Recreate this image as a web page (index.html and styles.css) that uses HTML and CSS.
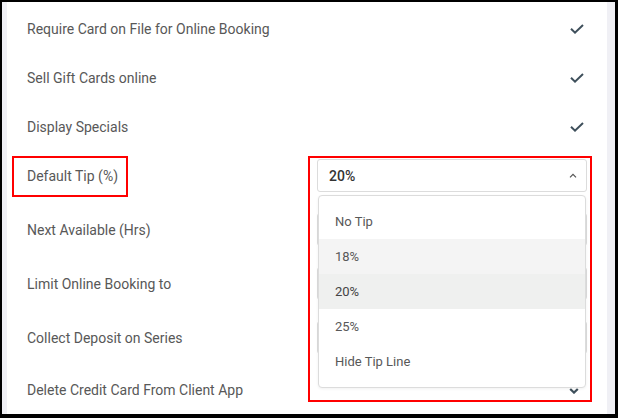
FILE: index.html
```html
<!DOCTYPE html>
<html lang="en">
<head>
  <meta charset="UTF-8">
  <title>Online Booking Settings</title>
  <link rel="stylesheet" href="styles.css">
</head>
<body>
  <div class="frame">
    <div class="panel">

      <div class="row">
        <span class="label">Require Card on File for Online Booking</span>
        <span class="value">
          <svg class="check" width="14" height="10" viewBox="0 0 14 10"><path d="M1 4.8 L5 8.6 L13 1"/></svg>
        </span>
      </div>

      <div class="row">
        <span class="label">Sell Gift Cards online</span>
        <span class="value">
          <svg class="check" width="14" height="10" viewBox="0 0 14 10"><path d="M1 4.8 L5 8.6 L13 1"/></svg>
        </span>
      </div>

      <div class="row">
        <span class="label">Display Specials</span>
        <span class="value">
          <svg class="check" width="14" height="10" viewBox="0 0 14 10"><path d="M1 4.8 L5 8.6 L13 1"/></svg>
        </span>
      </div>

      <!-- open dropdown -->
      <div class="row row-field">
        <span class="label">Default Tip (%)</span>
        <div class="field">
          <div class="select">
            <span class="select-text">20%</span>
            <svg class="caret" width="8" height="5" viewBox="0 0 8 5"><path d="M1 4.3 L4 1.3 L7 4.3"/></svg>
          </div>
          <ul class="menu">
            <li class="menu-item">No Tip</li>
            <li class="menu-item hover">18%</li>
            <li class="menu-item selected">20%</li>
            <li class="menu-item">25%</li>
            <li class="menu-item">Hide Tip Line</li>
          </ul>
        </div>
        <div class="mark mark-label"></div>
        <div class="mark mark-field"></div>
      </div>

      <div class="row row-field">
        <span class="label">Next Available (Hrs)</span>
        <div class="field"><div class="select"></div></div>
      </div>

      <div class="row row-field">
        <span class="label">Limit Online Booking to</span>
        <div class="field"><div class="select"></div></div>
      </div>

      <div class="row row-field">
        <span class="label">Collect Deposit on Series</span>
        <div class="field"><div class="select"></div></div>
      </div>

      <div class="row row-field">
        <span class="label">Delete Credit Card From Client App</span>
        <div class="field">
          <div class="select select-plain">
            <svg class="caret-down" width="10" height="6" viewBox="0 0 10 6"><path d="M1.2 1 L5 4.6 L8.8 1"/></svg>
          </div>
        </div>
      </div>

    </div>
  </div>
</body>
</html>
```

FILE: styles.css
```css
/* Page frame */
body {
  margin: 0;
  font-family: Roboto, 'Liberation Sans', sans-serif;
}

.frame {
  box-sizing: border-box;
  width: 618px;
  height: 418px;
  border: solid #000;
  border-width: 2px 3px 4px 2px;
  background: #f0f0f5;
  overflow: hidden;
}

.panel {
  height: 100%;
  margin: 0 8px 0 5px;
  padding-top: 2px;
  background: #fff;
  box-sizing: border-box;
}

/* Setting rows */
.row {
  position: relative;
  display: flex;
  align-items: center;
  height: 49px;
  padding: 0 20px;
}

.row-field {
  height: auto;
  padding-top: 8px;
  padding-bottom: 13px;
}

.label {
  flex: 1;
  font-size: 14px;
  color: #585858;
}

.value {
  display: flex;
  justify-content: flex-end;
  width: 270px;
  padding-right: 3px;
  box-sizing: border-box;
}

.check path {
  fill: none;
  stroke: #3e4f5b;
  stroke-width: 2;
}

/* Select fields */
.field {
  position: relative;
  width: 270px;
}

.select {
  display: flex;
  align-items: center;
  height: 33px;
  padding: 0 9px 0 11px;
  border: 1px solid #dcdcdc;
  border-radius: 3px;
  box-sizing: border-box;
}

.select-plain {
  height: 29px;
  border-color: transparent;
  padding-right: 7px;
}

.select-text {
  flex: 1;
  font-size: 14px;
  font-weight: 500;
  color: #333;
}

.caret {
  margin-left: auto;
}
.caret path {
  fill: none;
  stroke: #555;
  stroke-width: 1.2;
}

.caret-down {
  margin-left: auto;
  margin-top: 3px;
}
.caret-down path {
  fill: none;
  stroke: #3e4f5b;
  stroke-width: 2.2;
}

/* Dropdown menu */
.menu {
  position: absolute;
  top: 36px;
  left: 1px;
  z-index: 5;
  width: 268px;
  margin: 0;
  padding: 8px 0;
  list-style: none;
  background: #fff;
  border: 1px solid #dcdcdc;
  border-radius: 4px;
  box-sizing: border-box;
  box-shadow: 0 1px 3px rgba(0, 0, 0, 0.06);
}

.menu-item {
  height: 35px;
  line-height: 35px;
  padding-left: 16px;
  font-size: 13px;
  color: #585858;
}
.menu-item.hover {
  background: #f4f4f4;
}
.menu-item.selected {
  background: #eff0ef;
  color: #444;
}

/* Red annotation boxes */
.mark {
  position: absolute;
  z-index: 10;
  border: 2px solid #f00;
  box-sizing: border-box;
  pointer-events: none;
}
.mark-label {
  top: 5px;
  left: 5px;
  width: 116px;
  height: 41px;
}
.mark-field {
  top: 5px;
  left: 301px;
  width: 284px;
  height: 246px;
}
```
